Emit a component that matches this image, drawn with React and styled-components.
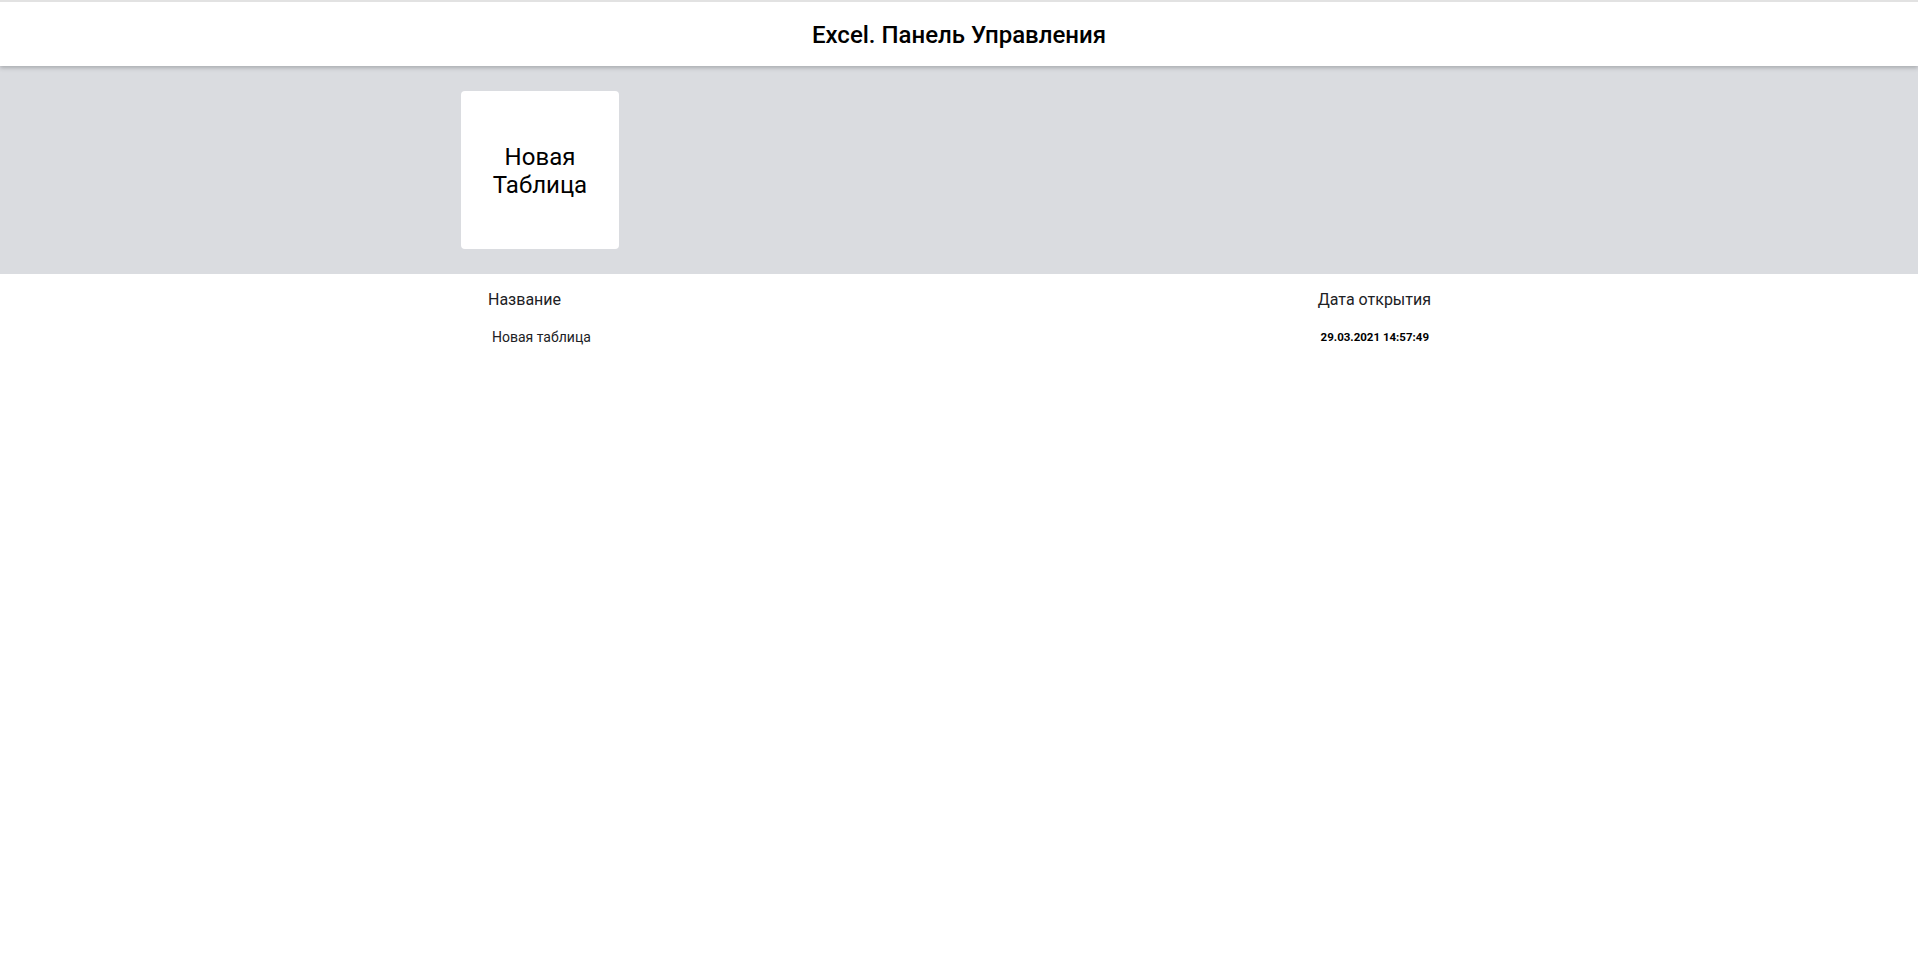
import React from 'react'
import styled, { createGlobalStyle } from 'styled-components'

const GlobalStyle = createGlobalStyle`
  * {
    box-sizing: border-box;
  }
  body {
    margin: 0;
    font-family: Roboto, "Liberation Sans", sans-serif;
    color: #000;
    background: #fff;
  }
`

const records = [
  { id: 1, name: 'Новая таблица', date: '29.03.2021 14:57:49' }
]

const App = () => {
  return (
    <Page>
      <GlobalStyle />
      <Header>
        <Title>Excel. Панель Управления</Title>
      </Header>

      <NewSection>
        <Container>
          <CreateCard>Новая<br />Таблица</CreateCard>
        </Container>
      </NewSection>

      <Container>
        <ListHeader>
          <span>Название</span>
          <span>Дата открытия</span>
        </ListHeader>
        <List>
          {records.map(record => (
            <Row key={record.id}>
              <RowName>{record.name}</RowName>
              <RowDate>{record.date}</RowDate>
            </Row>
          ))}
        </List>
      </Container>
    </Page>
  )
}

export default App

const Page = styled.div`
  min-height: 100vh;
`

const Header = styled.div`
  height: 66px;
  display: flex;
  align-items: center;
  justify-content: center;
  padding-top: 2px;
  border-top: 2px solid #e2e2e2;
  background: #fff;
  position: relative;
  z-index: 1;
  box-shadow: 0 2px 4px rgba(60, 64, 67, 0.3);
`

const Title = styled.h1`
  margin: 0;
  font-size: 24px;
  font-weight: 500;
  color: #000;
`

const NewSection = styled.div`
  background: #dadce0;
  padding: 25px 0 25px;
`

const Container = styled.div`
  width: 1000px;
  margin: 0 auto;
`

const CreateCard = styled.div`
  width: 158px;
  height: 158px;
  margin-left: 2px;
  background: #fff;
  border-radius: 4px;
  display: flex;
  align-items: center;
  justify-content: center;
  padding-top: 2px;
  text-align: center;
  font-size: 24px;
  line-height: 28px;
  cursor: pointer;
`

const ListHeader = styled.div`
  display: flex;
  justify-content: space-between;
  padding: 16px 28px 0 29px;
  font-size: 16px;
  line-height: 20px;
  color: #202124;
`

const List = styled.ul`
  list-style: none;
  margin: 0;
  padding: 15px 0 0;
`

const Row = styled.li`
  display: flex;
  justify-content: space-between;
  align-items: center;
  padding: 4px 30px 4px 33px;
`

const RowName = styled.span`
  font-size: 14px;
  color: #202124;
`

const RowDate = styled.span`
  font-size: 11.5px;
  font-weight: 700;
`
